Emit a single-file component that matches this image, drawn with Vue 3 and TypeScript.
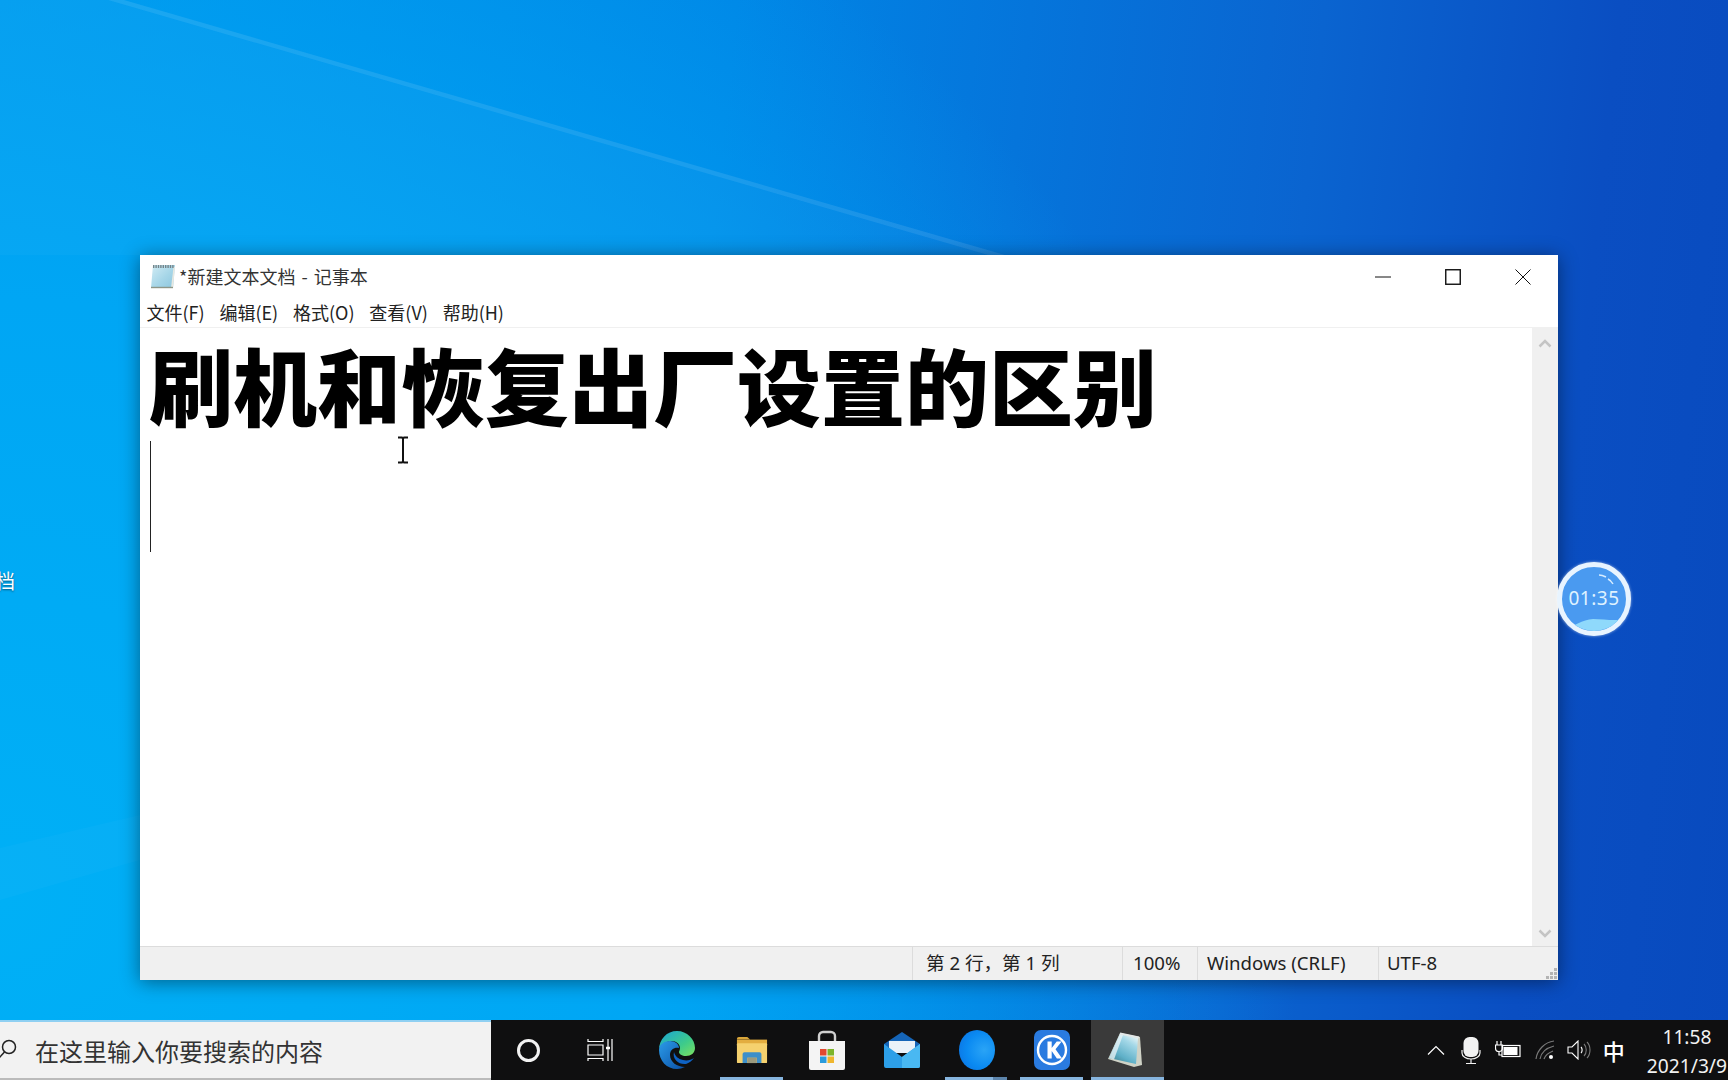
<script setup lang="ts">
const menus: string[] = ['文件(F)', '编辑(E)', '格式(O)', '查看(V)', '帮助(H)']

interface StatusCell {
  text: string
  cls: string
}

const statusCells: StatusCell[] = [
  { text: '第 2 行，第 1 列', cls: 'pos' },
  { text: '100%', cls: 'zoom' },
  { text: 'Windows (CRLF)', cls: 'eol' },
  { text: 'UTF-8', cls: 'enc' },
]
</script>

<template>
  <div class="desktop">
    <svg class="beams" width="1728" height="1020" viewBox="0 0 1728 1020">
      <polygon points="108,0 124,0 1005,255 988,255" fill="#fff" opacity="0.1" />
      <polygon points="0,0 108,0 988,255 140,255 0,255" fill="#fff" opacity="0.025" />
      <polygon points="0,848 140,815 140,860 0,900" fill="#fff" opacity="0.025" />
    </svg>

    <div class="desktop-label">档</div>

    <div class="window">
      <div class="titlebar">
        <svg class="app-icon" width="26" height="25" viewBox="0 0 26 25">
          <defs>
            <linearGradient id="padSmall" x1="0" y1="0" x2="1" y2="1">
              <stop offset="0" stop-color="#d2ecf4" />
              <stop offset="0.550" stop-color="#a6d6e8" />
              <stop offset="1" stop-color="#8cc6de" />
            </linearGradient>
          </defs>
          <path d="M3 1h22l-2 23H1z" fill="url(#padSmall)" />
          <path d="M23.500 3h1.500l-2 21H21z" fill="#e6e8e2" />
          <path d="M3 2.500h21.500" stroke="#74848a" stroke-width="3" stroke-dasharray="1.400 1" />
          <path d="M1 23.500h22" stroke="#8e9688" stroke-width="1.400" />
        </svg>
        <span class="title-text">*新建文本文档 - 记事本</span>
        <div class="controls">
          <svg width="16" height="16" viewBox="0 0 16 16"><path d="M0 8h16" stroke="#111" stroke-width="1" /></svg>
          <svg width="16" height="16" viewBox="0 0 16 16"><rect x="0.750" y="0.750" width="14.500" height="14.500" fill="none" stroke="#111" stroke-width="1.400" /></svg>
          <svg width="16" height="16" viewBox="0 0 16 16"><path d="M0.500 0.500l15 15M15.500 0.500l-15 15" stroke="#111" stroke-width="1" /></svg>
        </div>
      </div>

      <div class="menubar">
        <span v-for="m in menus" :key="m" class="menu-item">{{ m }}</span>
      </div>

      <div class="editor">
        <div class="text-area">
          <div class="line heading">刷机和恢复出厂设置的区别</div>
          <div class="line"><span class="caret"></span></div>
          <svg class="ibeam" width="14" height="28" viewBox="0 0 14 28">
            <path d="M2 1.500h4l1 1 1-1h4M7 2.500v23M2 26.500h4l1-1 1 1h4" fill="none" stroke="#111" stroke-width="2" />
          </svg>
        </div>
        <div class="scrollbar">
          <svg width="14" height="9" viewBox="0 0 14 9"><path d="M1.500 7.500L7 2l5.500 5.500" fill="none" stroke="#c4c4c4" stroke-width="2.500" /></svg>
          <svg width="14" height="9" viewBox="0 0 14 9"><path d="M1.500 1.500L7 7l5.500-5.500" fill="none" stroke="#c4c4c4" stroke-width="2.500" /></svg>
        </div>
      </div>

      <div class="statusbar">
        <div class="status-spacer"></div>
        <div v-for="c in statusCells" :key="c.text" class="status-cell" :class="c.cls">{{ c.text }}</div>
        <svg class="grip" width="11" height="11" viewBox="0 0 11 11" fill="#b4b4b4">
          <rect x="8" y="0" width="3" height="3" />
          <rect x="4" y="4" width="3" height="3" />
          <rect x="8" y="4" width="3" height="3" />
          <rect x="0" y="8" width="3" height="3" />
          <rect x="4" y="8" width="3" height="3" />
          <rect x="8" y="8" width="3" height="3" />
        </svg>
      </div>
    </div>

    <div class="timer">
      <svg class="timer-art" width="74" height="74" viewBox="0 0 74 74">
        <path d="M0 70C14 66 24 58 36 57c12 0 24 3 38-1v18H0z" fill="#8fd9fb" />
        <path d="M42 13c3 0 5 1 7 2M51 17c2 1 4 3 5 5" fill="none" stroke="#d6ecff" stroke-width="1.500" />
      </svg>
      <span class="timer-text">01:35</span>
    </div>

    <div class="taskbar">
      <div class="search">
        <svg class="search-icon" width="22" height="24" viewBox="0 0 22 24">
          <circle cx="9" cy="9" r="6.500" fill="none" stroke="#222" stroke-width="1.500" />
          <path d="M4.500 14L-1 20" stroke="#222" stroke-width="1.500" />
        </svg>
        <span class="search-text">在这里输入你要搜索的内容</span>
      </div>

      <div class="task-btn cortana-btn">
        <span class="cortana"></span>
      </div>
      <div class="task-btn view-btn">
        <svg width="26" height="26" viewBox="0 0 26 26" fill="none" stroke="#fff" stroke-width="1.200">
          <path d="M1 2v2.500h15V2M1 8h15v10H1zM1 24v-2.500h15V24M21 2v22M25 2v22" />
          <path d="M19 11h4" stroke-width="2.500" />
        </svg>
      </div>

      <div class="task-btn">
        <svg width="38" height="40" viewBox="0 0 38 40">
          <defs>
            <linearGradient id="edgeA" x1="0" y1="0" x2="1" y2="1">
              <stop offset="0" stop-color="#1aa3d8" />
              <stop offset="0.600" stop-color="#3ecb8a" />
              <stop offset="1" stop-color="#7ce05f" />
            </linearGradient>
            <linearGradient id="edgeB" x1="0" y1="0" x2="1" y2="1">
              <stop offset="0" stop-color="#2b9be8" />
              <stop offset="1" stop-color="#0a4fa6" />
            </linearGradient>
          </defs>
          <path d="M1 20C1 9 9 1 19 1c10 0 18 8 18 17 0 5-4 8-9 8-4 0-7-2-7-4 0-1 1-2 1-4 0-4-4-7-8-7-6 0-13 4-13 9z" fill="url(#edgeA)" />
          <path d="M1 20c0-6 6-9 11-9 5 0 9 3 9 7-4-1-9 1-9 7 0 7 7 12 15 12-3 1-5 2-8 2C9 39 1 31 1 20z" fill="url(#edgeB)" />
          <path d="M16 22c-2 7 5 13 12 12 3-1 6-3 8-6-3 2-7 3-11 2-5-1-8-4-9-8z" fill="#0e62c4" />
        </svg>
      </div>

      <div class="task-btn open">
        <svg width="32" height="28" viewBox="0 1 34 31" preserveAspectRatio="none">
          <path d="M1 4a2 2 0 0 1 2-2h9l3 3h-14z" fill="#d9a63a" />
          <rect x="1" y="5" width="32" height="7" fill="#e3ad3f" />
          <rect x="1" y="9" width="32" height="22" rx="1" fill="#f5d16e" />
          <path d="M7 31V21a2 2 0 0 1 2-2h16a2 2 0 0 1 2 2v10h-5v-6H12v6z" fill="#3c8fca" />
          <rect x="12" y="25" width="10" height="6" fill="#9b9a7e" />
        </svg>
      </div>

      <div class="task-btn">
        <svg width="36" height="40" viewBox="0 0 36 40">
          <path d="M10 14V6a4 4 0 0 1 4-4h8a4 4 0 0 1 4 4v8" fill="none" stroke="#cfcfcf" stroke-width="2.400" />
          <path d="M0 11h36v27a2 2 0 0 1-2 2H2a2 2 0 0 1-2-2z" fill="#f4f4f4" />
          <rect x="11" y="19" width="6.500" height="6.500" fill="#e2492f" />
          <rect x="18.500" y="19" width="6.500" height="6.500" fill="#7db52b" />
          <rect x="11" y="26.500" width="6.500" height="6.500" fill="#2a9bdc" />
          <rect x="18.500" y="26.500" width="6.500" height="6.500" fill="#efb62e" />
        </svg>
      </div>

      <div class="task-btn">
        <svg width="36" height="36" viewBox="0 0 36 36">
          <path d="M0 12L18 0l18 12v3H0z" fill="#1565b8" />
          <path d="M5 9h26v12H5z" fill="#eaf2f9" />
          <path d="M0 12l18 13 18-13v22a2 2 0 0 1-2 2H2a2 2 0 0 1-2-2z" fill="#2d9fe8" />
          <path d="M36 12v22a2 2 0 0 1-2 2H18V25z" fill="#49b8f2" />
        </svg>
      </div>

      <div class="task-btn open split">
        <span class="blue-ball"></span>
      </div>

      <div class="task-btn open">
        <svg width="36" height="40" viewBox="0 0 36 40">
          <rect width="36" height="40" rx="7" fill="#2a7be0" />
          <circle cx="18" cy="20" r="14" fill="none" stroke="#fff" stroke-width="2.400" />
          <path d="M13.500 11.500h4.200v6.500l5-6.500h5l-6.200 7.800 6.600 9.200h-5.200l-5.200-7.400v7.400h-4.200z" fill="#fff" />
        </svg>
      </div>

      <div class="task-btn active open">
        <svg width="34" height="36" viewBox="0 0 34 36">
          <defs>
            <linearGradient id="padSheet" x1="0.200" y1="1" x2="0.800" y2="0">
              <stop offset="0" stop-color="#3f7f8c" />
              <stop offset="0.300" stop-color="#5fb0c8" />
              <stop offset="0.750" stop-color="#a4d8e8" />
              <stop offset="1" stop-color="#e8f4f6" />
            </linearGradient>
          </defs>
          <path d="M12 1l20 4 2 28-8 2-26-8z" fill="#cfd2c6" />
          <path d="M12 2l18 4-2 26L1 26z" fill="url(#padSheet)" />
          <path d="M12 2L1 26l5 1.500L15 3z" fill="#eef6f8" opacity="0.750" />
          <path d="M12 1.500l19 4" stroke="#e4e8e8" stroke-width="2" />
        </svg>
      </div>

      <div class="tray">
        <svg width="18" height="10" viewBox="0 0 18 10"><path d="M1 9.500L9 1.500l8 8" fill="none" stroke="#fff" stroke-width="1.200" /></svg>
        <svg class="mic" width="20" height="27" viewBox="0 0 20 27">
          <rect x="2.500" y="0" width="15" height="20" rx="6" fill="#f2f2f2" />
          <path d="M1 13v3a9 6 0 0 0 18 0v-3M10 22v4M5 26.500h10" fill="none" stroke="#f2f2f2" stroke-width="1.200" />
        </svg>
        <svg class="battery" width="26" height="18" viewBox="0 0 26 18" fill="none" stroke="#fff" stroke-width="1.200">
          <path d="M2 0v4M6 0v4M0.500 4h7v3a3.500 3.500 0 0 1-7 0zM4 10.500V14h3" />
          <rect x="7" y="4.500" width="18" height="11" />
          <rect x="8.500" y="6" width="14" height="8" fill="#fff" stroke="none" />
        </svg>
        <svg class="wifi" width="20" height="20" viewBox="0 0 20 20" fill="none" stroke="#7a7a7a" stroke-width="1.200">
          <path d="M1 19C2 10 10 2 19 1M5 19c1-6 6-11 14-13M9 19c1-3 4-6 9-8" />
          <circle cx="16" cy="17" r="2" fill="#fff" stroke="none" />
        </svg>
        <svg class="volume" width="24" height="20" viewBox="0 0 24 20" fill="none" stroke="#fff" stroke-width="1.100">
          <path d="M1 7h4l6-6v18l-6-6H1z" />
          <path d="M14 7c1.500 1.500 1.500 4.500 0 6" />
          <path d="M17 4c3 3 3 9 0 12M20 2c4 4 4 12 0 16" stroke="#7a7a7a" />
        </svg>
        <span class="ime">中</span>
        <div class="clock">
          <span>11:58</span>
          <span>2021/3/9</span>
        </div>
      </div>
    </div>
  </div>
</template>

<style scoped>
.desktop {
  position: relative;
  width: 1728px;
  height: 1080px;
  overflow: hidden;
  display: flex;
  flex-direction: column;
  justify-content: flex-end;
  font-family: "Noto Sans CJK SC", "Noto Sans", sans-serif;
  background:
    radial-gradient(ellipse 1300px 1200px at 0px 900px, #00b0f6 0%, #00a6f4 50%, rgba(0, 140, 232, 0) 100%),
    linear-gradient(96deg, #0096ec 0%, #0086e6 40%, #0a64d0 72%, #0a4ec2 88%, #084abe 100%);
}

.beams {
  position: absolute;
  left: 0;
  top: 0;
}

.desktop-label {
  position: absolute;
  left: -5px;
  top: 567px;
  font-size: 20px;
  line-height: 28px;
  color: #fff;
  text-shadow: 0 1px 2px rgba(0, 0, 0, 0.5);
}

.window {
  position: absolute;
  left: 140px;
  top: 255px;
  width: 1418px;
  height: 725px;
  display: flex;
  flex-direction: column;
  background: #fff;
  box-shadow: 0 2px 18px rgba(0, 0, 0, 0.45);
}

.titlebar {
  height: 46px;
  box-sizing: border-box;
  display: flex;
  align-items: center;
  padding: 0 0 4px 10px;
  font-size: 18px;
  color: #333;
}

.app-icon {
  margin-right: 3px;
}

.title-text {
  flex: 1;
  word-spacing: 2px;
}

.controls {
  display: flex;
  gap: 54px;
  padding-right: 27px;
  margin-top: 1px;
}

.menubar {
  height: 27px;
  display: flex;
  gap: 14.800px;
  padding-left: 6.500px;
  font-size: 18px;
  line-height: 22px;
  color: #222;
  border-bottom: 1px solid #f0f0f0;
  box-sizing: border-box;
}

.editor {
  flex: 1;
  display: flex;
  min-height: 0;
}

.text-area {
  position: relative;
  flex: 1;
  padding-left: 9px;
}

.line {
  height: 111px;
  font-size: 84px;
  line-height: 111px;
  font-weight: 900;
  color: #000;
  white-space: nowrap;
}

.heading {
  margin-bottom: 2px;
}

.caret {
  display: block;
  width: 1px;
  height: 111px;
  margin-left: 1px;
  background: #222;
}

.ibeam {
  position: absolute;
  left: 256px;
  top: 108px;
}

.scrollbar {
  width: 26px;
  background: #f0f0f0;
  display: flex;
  flex-direction: column;
  justify-content: space-between;
  align-items: center;
  padding: 11px 0 9px;
  box-sizing: border-box;
}

.statusbar {
  position: relative;
  height: 34px;
  margin-top: -1px;
  display: flex;
  background: #f0f0f0;
  border-top: 1px solid #dcdcdc;
  box-sizing: border-box;
  font-family: "Noto Sans", "Noto Sans CJK SC", sans-serif;
  font-size: 18.600px;
  line-height: 32px;
  color: #222;
}

.status-spacer {
  width: 772px;
}

.status-cell {
  border-left: 1px solid #dcdcdc;
  white-space: nowrap;
  box-sizing: border-box;
}

.pos {
  width: 210px;
  padding-left: 13px;
}

.zoom {
  width: 75px;
  padding-left: 10px;
}

.eol {
  width: 181px;
  padding-left: 9px;
}

.enc {
  flex: 1;
  padding-left: 8px;
}

.grip {
  position: absolute;
  right: 1px;
  bottom: 1px;
}

.timer {
  position: absolute;
  left: 1557px;
  top: 562px;
  width: 74px;
  height: 74px;
  border-radius: 50%;
  border: 5px solid #e8f4ff;
  box-sizing: border-box;
  background: #4a9af0;
  overflow: hidden;
  display: flex;
  align-items: center;
  justify-content: center;
  box-shadow: 0 0 3px rgba(255, 255, 255, 0.6);
}

.timer-art {
  position: absolute;
  left: -5px;
  top: -5px;
}

.timer-text {
  position: relative;
  top: -1px;
  font-family: "Noto Sans", sans-serif;
  font-size: 19px;
  color: #dff2ff;
  letter-spacing: 0.500px;
}

.taskbar {
  position: relative;
  height: 60px;
  display: flex;
  align-items: stretch;
  background: #0f0f10;
}

.search {
  position: relative;
  width: 491px;
  flex: none;
  display: flex;
  align-items: center;
  background: #f2f2f2;
  border-top: 2px solid #8fd0f2;
  border-bottom: 2px solid #bbb;
  box-sizing: border-box;
  padding-left: 35px;
}

.search-icon {
  position: absolute;
  left: 0;
  top: 16px;
  overflow: visible;
}

.search-text {
  font-size: 24px;
  color: #333;
}

.task-btn {
  position: relative;
  width: 75px;
  flex: none;
  display: flex;
  align-items: center;
  justify-content: center;
}

.view-btn {
  width: 73px;
  padding-right: 6px;
  box-sizing: border-box;
}

.task-btn.open::after {
  content: "";
  position: absolute;
  left: 6px;
  right: 6px;
  bottom: 0;
  height: 3px;
  background: #86b4de;
}

.task-btn.split::after {
  right: 21px;
  box-shadow: 14px 0 0 #5c84ab;
}

.task-btn.active {
  width: 73px;
  margin-left: 2px;
  padding-right: 5px;
  box-sizing: border-box;
  background: #3a3a3a;
}

.task-btn.active::after {
  left: 0;
  right: 0;
}

.cortana {
  width: 23px;
  height: 23px;
  box-sizing: border-box;
  border: 3.500px solid #f2f2f2;
  border-radius: 50%;
}

.blue-ball {
  width: 36px;
  height: 40px;
  border-radius: 50%;
  background: radial-gradient(circle at 70% 50%, #2aa4f6 0%, #0a8af2 55%, #0c6ee0 100%);
}

.tray {
  flex: 1;
  display: flex;
  align-items: center;
  justify-content: flex-end;
  color: #fff;
  gap: 14px;
}

.tray > svg {
  flex: none;
}

.mic {
  margin-left: 2px;
}

.volume {
  margin-left: -2px;
}

.ime {
  margin-left: -2px;
  font-size: 22px;
  line-height: 28px;
  font-weight: 500;
  margin-right: 8px;
}

.clock {
  display: flex;
  flex-direction: column;
  align-items: center;
  font-family: "Noto Sans", sans-serif;
  font-size: 19.200px;
  line-height: 29px;
  color: #f2f2f2;
  margin-right: 1px;
  padding-top: 2px;
}
</style>
